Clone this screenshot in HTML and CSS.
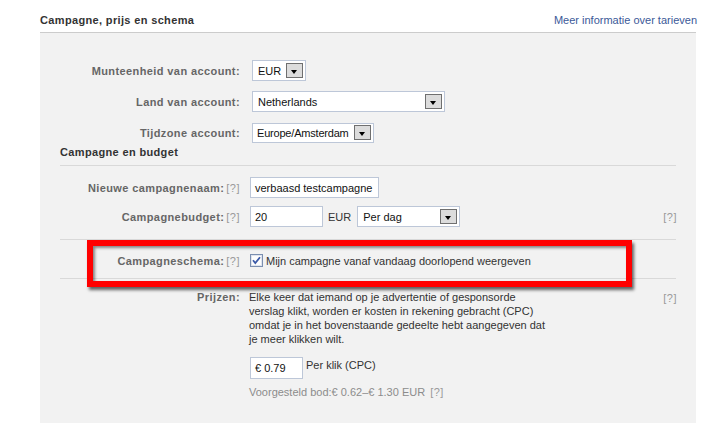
FILE: index.html
```html
<!DOCTYPE html>
<html lang="nl">
<head>
<meta charset="utf-8">
<title>Campagne, prijs en schema</title>
<link rel="stylesheet" href="styles.css">
</head>
<body>
<div class="page">
  <div class="head">
    <span class="title">Campagne, prijs en schema</span>
    <a class="more" href="#">Meer informatie over tarieven</a>
  </div>
  <div class="panel">
    <div class="account">
      <div class="row">
        <span class="lbl">Munteenheid van account:</span>
        <div class="select w-eur"><span class="val">EUR</span><i class="btn"></i></div>
      </div>
      <div class="row">
        <span class="lbl">Land van account:</span>
        <div class="select w-land"><span class="val">Netherlands</span><i class="btn"></i></div>
      </div>
      <div class="row">
        <span class="lbl">Tijdzone account:</span>
        <div class="select w-tz"><span class="val">Europe/Amsterdam</span><i class="btn"></i></div>
      </div>
    </div>

    <div class="sec-title">Campagne en budget</div>

    <div class="budget">
      <div class="row">
        <span class="lbl">Nieuwe campagnenaam:<span class="q">[?]</span></span>
        <div class="input w-name">verbaasd testcampagne</div>
      </div>
      <div class="row">
        <span class="lbl">Campagnebudget:<span class="q">[?]</span></span>
        <div class="input w-budget">20</div>
        <span class="cur">EUR</span>
        <div class="select w-perdag"><span class="val">Per dag</span><i class="btn"></i></div>
        <span class="q right">[?]</span>
      </div>
    </div>

    <div class="schema">
      <div class="row">
        <span class="lbl">Campagneschema:<span class="q">[?]</span></span>
        <svg class="check" width="13" height="13" viewBox="0 0 13 13">
          <rect x="0.5" y="0.5" width="12" height="12" fill="#fdfdfd" stroke="#7b8fb0"/>
          <rect x="1.5" y="1.5" width="10" height="10" fill="none" stroke="#dfe4ee"/>
          <path d="M3 6.2 L5.3 9 L10 3.2" fill="none" stroke="#3b5aa8" stroke-width="1.8"/>
        </svg>
        <span class="txt">Mijn campagne vanaf vandaag doorlopend weergeven</span>
      </div>
      <div class="highlight"></div>
    </div>

    <div class="prices">
      <span class="lbl plbl">Prijzen:</span>
      <div class="pbody">
        <p class="desc">Elke keer dat iemand op je advertentie of gesponsorde<br>verslag klikt, worden er kosten in rekening gebracht (CPC)<br>omdat je in het bovenstaande gedeelte hebt aangegeven dat<br>je meer klikken wilt.</p>
        <div class="bidrow">
          <div class="input w-bid">€ 0.79</div>
          <span class="perklik">Per klik (CPC)</span>
        </div>
        <div class="suggest">Voorgesteld bod:€ 0.62–€ 1.30 EUR <span class="q">[?]</span></div>
      </div>
      <span class="q right">[?]</span>
    </div>
  </div>
</div>
</body>
</html>
```
FILE: styles.css
```css
html, body {
  margin: 0;
  padding: 0;
  background: #ffffff;
}
body {
  font-family: "Liberation Sans", Arial, sans-serif;
  font-size: 11px;
  color: #333333;
  width: 708px;
  height: 424px;
  overflow: hidden;
}
.page {
  padding-left: 40px;
  width: 656px;
}
.head {
  height: 33px;
  border-bottom: 1px solid #cccccc;
  display: flex;
  align-items: flex-start;
  justify-content: space-between;
  box-sizing: border-box;
}
.head .title {
  font-weight: bold;
  color: #333333;
  letter-spacing: 0.35px;
  line-height: 14px;
  margin-top: 13px;
}
.head .more {
  color: #3b5998;
  text-decoration: none;
  line-height: 14px;
  margin-top: 13px;
  margin-right: -1px;
}
.panel {
  background: #f2f2f2;
  height: 390px;
  padding: 27px 20px 0 20px;
  box-sizing: border-box;
}
.row {
  display: flex;
  align-items: center;
  height: 21px;
}
.lbl {
  width: 180px;
  flex: none;
  text-align: right;
  font-weight: bold;
  color: #666666;
  letter-spacing: 0.4px;
  white-space: nowrap;
}
.q {
  font-weight: normal;
  color: #9a9a9a;
  letter-spacing: 0.5px;
  margin-left: 2px;
}
.account .row { gap: 12px; margin-bottom: 10px; }
.account .row:last-child { margin-bottom: 0; }

.select, .input {
  height: 21px;
  box-sizing: border-box;
  background: #ffffff;
  border: 1px solid #bdc7d8;
  display: flex;
  align-items: center;
  color: #111111;
}
.select .val {
  flex: 1;
  min-width: 0;
  padding-left: 5px;
  white-space: nowrap;
  overflow: hidden;
}
.w-tz .val { padding-left: 4px; letter-spacing: -0.2px; }
.input { padding-left: 4px; }
.btn {
  width: 17px;
  height: 15px;
  box-sizing: border-box;
  border: 1px solid #6f6f6f;
  background: #dcdcdc;
  margin-right: 2px;
  position: relative;
  flex: none;
}
.btn::after {
  content: "";
  position: absolute;
  left: 4px;
  top: 6px;
  border-left: 3.5px solid transparent;
  border-right: 3.5px solid transparent;
  border-top: 4px solid #000000;
}
.w-eur { width: 54px; }
.w-land { width: 193px; }
.w-tz { width: 122px; height: 20px; }
.w-name { width: 129px; }
.w-budget { width: 73px; }
.w-perdag { width: 103px; }
.w-bid { width: 53px; height: 22px; }

.sec-title {
  font-weight: bold;
  color: #333333;
  letter-spacing: 0.35px;
  line-height: 14px;
  padding-top: 2px;
  padding-bottom: 6px;
  border-bottom: 1px solid #d9d9d9;
}
.budget {
  padding-top: 11px;
  padding-bottom: 12px;
  border-bottom: 1px solid #d9d9d9;
}
.budget .row { gap: 10px; }
.budget .row + .row { margin-top: 8px; }
.budget .cur { margin-left: -5px; margin-right: -4px; color: #333333; }
.right { margin-left: auto; margin-right: -1px; }

.schema {
  position: relative;
  height: 38px;
  border-bottom: 1px solid #d9d9d9;
  display: flex;
  align-items: center;
}
.schema .row { gap: 10px; height: 14px; margin-top: 3px; }
.schema .check { flex: none; }
.schema .txt { margin-left: -7px; color: #333333; }
.highlight {
  position: absolute;
  left: 27px;
  top: 0;
  width: 545px;
  height: 47px;
  box-sizing: border-box;
  border: 6px solid #ff0000;
  box-shadow: 2px 3px 3px rgba(0, 0, 0, 0.6), inset 2px 2px 3px rgba(0, 0, 0, 0.45);
}

.prices {
  display: flex;
  align-items: flex-start;
  padding-top: 11px;
}
.plbl { line-height: 14px; }
.pbody { margin-left: 9px; }
.desc {
  margin: 0;
  line-height: 14px;
  color: #333333;
}
.bidrow {
  display: flex;
  align-items: flex-start;
  margin-top: 11px;
  margin-left: 1px;
}
.perklik { margin-left: 3px; line-height: 14px; margin-top: 1px; }
.suggest {
  color: #8c8c8c;
  margin-top: 6px;
  line-height: 14px;
}
.prices .right { line-height: 14px; margin-top: 1px; }
```
